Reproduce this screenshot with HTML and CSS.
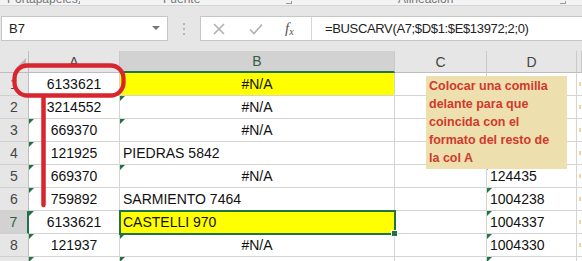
FILE: index.html
```html
<!DOCTYPE html>
<html lang="es">
<head>
    <meta charset="UTF-8">
    <title>BUSCARV</title>
    <link rel="stylesheet" href="styles.css">
</head>
<body>
<div class="page">
    <div class="ribbon">
        <div class="group g1"><span class="label">Portapapeles</span><span class="launch"></span></div>
        <div class="group g2"><span class="label">Fuente</span><span class="launch"></span></div>
        <div class="group g3"><span class="label">Alineación</span><span class="launch"></span></div>
    </div>

    <div class="fbar">
        <div class="namebox">
            <span>B7</span>
            <svg width="8" height="5" viewBox="0 0 8 5"><path d="M0 0 L8 0 L4 4 Z" fill="#777"/></svg>
        </div>
        <div class="grip"><i></i><i></i><i></i></div>
        <div class="fbox">
            <div class="fbtns">
                <svg class="ico-x" width="12" height="12" viewBox="0 0 12 12"><path d="M1 1 L11 11 M11 1 L1 11" stroke="#b0b0b0" stroke-width="1.6"/></svg>
                <svg class="ico-ok" width="14" height="12" viewBox="0 0 14 12"><path d="M1 6.5 L5 10.5 L13 1.5" fill="none" stroke="#b0b0b0" stroke-width="1.6"/></svg>
                <span class="fx"><i>f</i><sub>x</sub></span>
            </div>
            <div class="finput">=BUSCARV(A7;$D$1:$E$13972;2;0)</div>
        </div>
    </div>

    <div class="sheet">
        <div class="hd corner"></div>
        <div class="hd">A</div>
        <div class="hd hsel">B</div>
        <div class="hd">C</div>
        <div class="hd">D</div>
        <div class="hd"></div>

        <div class="rh">1</div>
        <div class="c num">6133621</div>
        <div class="c mid yellow">#N/A</div>
        <div class="c"></div>
        <div class="c"></div>
        <div class="c e"><span class="mark"></span></div>

        <div class="rh">2</div>
        <div class="c num">3214552</div>
        <div class="c mid tri">#N/A</div>
        <div class="c"></div>
        <div class="c"></div>
        <div class="c e"><span class="mark"></span></div>

        <div class="rh">3</div>
        <div class="c num tri">669370</div>
        <div class="c mid tri">#N/A</div>
        <div class="c"></div>
        <div class="c"></div>
        <div class="c e"><span class="mark"></span></div>

        <div class="rh">4</div>
        <div class="c num tri">121925</div>
        <div class="c">PIEDRAS 5842</div>
        <div class="c"></div>
        <div class="c"></div>
        <div class="c e"><span class="mark"></span></div>

        <div class="rh">5</div>
        <div class="c num tri">669370</div>
        <div class="c mid tri">#N/A</div>
        <div class="c"></div>
        <div class="c tri">124435</div>
        <div class="c e"><span class="mark"></span></div>

        <div class="rh">6</div>
        <div class="c num tri">759892</div>
        <div class="c">SARMIENTO 7464</div>
        <div class="c"></div>
        <div class="c tri">1004238</div>
        <div class="c e"><span class="mark"></span></div>

        <div class="rh rsel">7</div>
        <div class="c num tri">6133621</div>
        <div class="c yellow sel">CASTELLI 970</div>
        <div class="c"></div>
        <div class="c tri">1004337</div>
        <div class="c e"><span class="mark"></span></div>

        <div class="rh">8</div>
        <div class="c num tri">121937</div>
        <div class="c mid tri">#N/A</div>
        <div class="c"></div>
        <div class="c tri">1004330</div>
        <div class="c e"><span class="mark"></span></div>

        <div class="rh">9</div>
        <div class="c num tri"></div>
        <div class="c mid tri"></div>
        <div class="c"></div>
        <div class="c tri"></div>
        <div class="c e"></div>
    </div>

    <!-- comentario superpuesto -->
    <div class="comment">Colocar una comilla<br>delante para que<br>coincida con el<br>formato del resto de<br>la col A</div>

    <!-- marca roja a mano -->
    <svg class="scribble" width="582" height="261" viewBox="0 0 582 261">
        <rect x="14.5" y="65.5" width="109" height="30" rx="13" fill="none" stroke="#d7262e" stroke-width="4.3"/>
        <path d="M43.5 96 L43.5 205" stroke="#d7262e" stroke-width="4.5" stroke-linecap="round"/>
    </svg>
</div>
</body>
</html>
```

FILE: styles.css
```css
body {
    margin: 0;
    font-family: "Liberation Sans", Arial, sans-serif;
    background: #fff;
    color: #000;
    width: 582px;
    height: 261px;
    overflow: hidden;
}
.page {
    position: relative;
    height: 261px;
    overflow: hidden;
}

/* ribbon (solo se ve el borde inferior) */
.ribbon {
    height: 5px;
    background: #f3f3f3;
    border-bottom: 1px solid #d6d6d6;
    display: flex;
    overflow: hidden;
}
.group {
    display: flex;
    align-items: flex-start;
}
.g1 { width: 84px; padding-left: 7px; box-sizing: border-box; }
.g2 { width: 212px; padding-left: 79px; box-sizing: border-box; }
.g3 { width: 274px; padding-left: 102px; box-sizing: border-box; }
.label {
    font-size: 12px;
    line-height: 12px;
    color: #777;
    margin-top: -7px;
}
.launch {
    margin-left: auto;
    margin-right: 4px;
    width: 5px;
    height: 2px;
    margin-top: 1px;
    border-right: 1px solid #999;
    border-bottom: 1px solid #999;
}

/* barra de formulas */
.fbar {
    display: flex;
    align-items: center;
    height: 45px;
    background: #e6e6e6;
}
.namebox {
    margin-left: 1px;
    width: 167px;
    height: 25px;
    box-sizing: border-box;
    border: 1px solid #c6c6c6;
    background: #fff;
    display: flex;
    align-items: center;
    justify-content: space-between;
    padding: 0 7px 0 7px;
    font-size: 13px;
    color: #222;
}
.grip {
    width: 32px;
    display: flex;
    flex-direction: column;
    align-items: center;
    gap: 3px;
}
.grip i {
    width: 2px;
    height: 2px;
    background: #b4b4b4;
}
.fbox {
    flex: 1;
    height: 25px;
    display: flex;
    background: #fff;
    border: 1px solid #c6c6c6;
    border-right: none;
    box-sizing: border-box;
}
.fbtns {
    width: 111px;
    display: flex;
    align-items: center;
    border-right: 1px solid #d4d4d4;
    box-sizing: border-box;
}
.ico-x { margin-left: 12px; }
.ico-ok { margin-left: 24px; }
.fx {
    margin-left: 22px;
    font-family: "Liberation Serif", serif;
    font-size: 15px;
    color: #555;
}
.fx sub {
    font-size: 10px;
    font-style: italic;
    vertical-align: -2px;
}
.finput {
    padding-left: 13px;
    font-size: 13px;
    letter-spacing: -0.35px;
    line-height: 23px;
    color: #222;
}

/* hoja */
.sheet {
    display: grid;
    grid-template-columns: 29px 91px 275px 92px 90px 5px;
    grid-template-rows: 22px repeat(9, 23px);
}
.hd {
    background: #e6e6e6;
    border-right: 1px solid #c9c9c9;
    border-bottom: 1px solid #bdbdbd;
    text-align: center;
    font-size: 14px;
    line-height: 22px;
    color: #444;
    box-sizing: border-box;
}
.corner {
    position: relative;
    border-right-color: #bdbdbd;
}
.corner::after {
    content: "";
    position: absolute;
    right: 2px;
    bottom: 4px;
    border-bottom: 10px solid #b9b9b9;
    border-left: 10px solid transparent;
}
.hsel {
    background: #d2d2d2;
    border-bottom: 2px solid #217346;
    color: #2f5f47;
    line-height: 21px;
}
.rh {
    background: #e6e6e6;
    border-right: 1px solid #bdbdbd;
    border-bottom: 1px solid #d0d0d0;
    text-align: center;
    font-size: 14px;
    line-height: 22px;
    color: #444;
    box-sizing: border-box;
}
.rsel {
    background: #d2d2d2;
    border-right: 2px solid #217346;
    color: #2f5f47;
}
.c {
    position: relative;
    border-right: 1px solid #d4d4d4;
    border-bottom: 1px solid #d4d4d4;
    box-sizing: border-box;
    font-size: 14px;
    line-height: 22px;
    padding: 0 3px;
    white-space: nowrap;
    color: #111;
}
.num, .mid {
    text-align: center;
}
.yellow {
    background: #ffff00;
}
.tri::before {
    content: "";
    position: absolute;
    left: 0;
    top: 0;
    border-top: 5px solid #217346;
    border-right: 5px solid transparent;
}
.sel {
    outline: 2px solid #217346;
    outline-offset: -1px;
    z-index: 1;
}
.sel::after {
    content: "";
    position: absolute;
    right: -4px;
    bottom: -4px;
    width: 5px;
    height: 5px;
    background: #217346;
    border: 1px solid #fff;
}
.e {
    padding: 0;
    border-right: none;
}
.mark {
    display: block;
    width: 2px;
    height: 4px;
    margin: 9px 0 0 2px;
    background: #f3d597;
}

/* comentario */
.comment {
    position: absolute;
    left: 426px;
    top: 76px;
    width: 141px;
    height: 93px;
    box-sizing: border-box;
    padding: 1px 3px 0 3px;
    background: #eddfae;
    color: #d0392b;
    font-weight: bold;
    font-size: 12.5px;
    line-height: 18px;
    white-space: nowrap;
    z-index: 2;
}

.scribble {
    position: absolute;
    left: 0;
    top: 0;
    pointer-events: none;
    z-index: 3;
}
```
